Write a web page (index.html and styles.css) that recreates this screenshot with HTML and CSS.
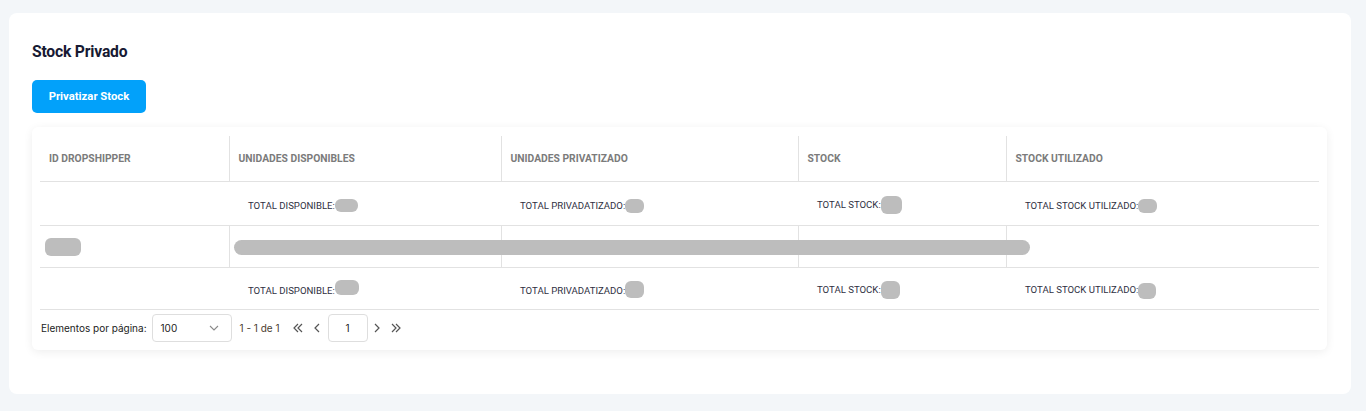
FILE: index.html
```html
<!DOCTYPE html>
<html lang="es">
<head>
  <meta charset="UTF-8" />
  <meta name="viewport" content="width=device-width, initial-scale=1.0"/>
  <title>Stock Privado</title>
  <link rel="stylesheet" href="styles.css">
</head>
<body>
  <div class="page-card">
    <h2 class="page-title">Stock Privado</h2>
    <button class="primary-btn">Privatizar Stock</button>

    <div class="table-card">
      <table class="stock-table">
        <colgroup>
          <col style="width:189px">
          <col style="width:272px">
          <col style="width:297px">
          <col style="width:208px">
          <col>
        </colgroup>
        <thead>
          <tr class="head-row">
            <th>ID DROPSHIPPER</th>
            <th>UNIDADES DISPONIBLES</th>
            <th>UNIDADES PRIVATIZADO</th>
            <th>STOCK</th>
            <th>STOCK UTILIZADO</th>
          </tr>
          <tr class="total-row">
            <td></td>
            <td><span class="total">TOTAL DISPONIBLE:<span class="skel s-a"></span></span></td>
            <td><span class="total">TOTAL PRIVADATIZADO:<span class="skel s-b"></span></span></td>
            <td><span class="total">TOTAL STOCK:<span class="skel s-c"></span></span></td>
            <td><span class="total">TOTAL STOCK UTILIZADO:<span class="skel s-b"></span></span></td>
          </tr>
        </thead>
        <tbody>
          <tr class="data-row">
            <td><span class="skel s-id"></span></td>
            <td><span class="skel s-bar"></span></td>
            <td></td>
            <td></td>
            <td></td>
          </tr>
        </tbody>
        <tfoot>
          <tr class="total-row foot">
            <td></td>
            <td><span class="total">TOTAL DISPONIBLE:<span class="skel s-a2"></span></span></td>
            <td><span class="total">TOTAL PRIVADATIZADO:<span class="skel s-b2"></span></span></td>
            <td><span class="total">TOTAL STOCK:<span class="skel s-c2"></span></span></td>
            <td><span class="total">TOTAL STOCK UTILIZADO:<span class="skel s-d2"></span></span></td>
          </tr>
        </tfoot>
      </table>

      <div class="paginator">
        <span class="pag-label">Elementos por página:</span>
        <div class="pag-select">
          <span>100</span>
          <svg width="10" height="6" viewBox="0 0 10 6"><path d="M1 1l4 4 4-4" fill="none" stroke="#8a8a8a" stroke-width="1.1"/></svg>
        </div>
        <span class="pag-range">1 - 1 de 1</span>
        <button class="pag-icon">
          <svg width="12" height="10" viewBox="0 0 12 10"><path d="M6 1L2 5l4 4M10 1L6 5l4 4" fill="none" stroke="#555" stroke-width="1.2"/></svg>
        </button>
        <button class="pag-icon">
          <svg width="8" height="10" viewBox="0 0 8 10"><path d="M6 1L2 5l4 4" fill="none" stroke="#555" stroke-width="1.2"/></svg>
        </button>
        <div class="pag-input">1</div>
        <button class="pag-icon">
          <svg width="8" height="10" viewBox="0 0 8 10"><path d="M2 1l4 4-4 4" fill="none" stroke="#555" stroke-width="1.2"/></svg>
        </button>
        <button class="pag-icon">
          <svg width="12" height="10" viewBox="0 0 12 10"><path d="M2 1l4 4-4 4M6 1l4 4-4 4" fill="none" stroke="#555" stroke-width="1.2"/></svg>
        </button>
      </div>
    </div>
  </div>
</body>
</html>
```

FILE: styles.css
```css
html, body {
  margin: 0;
  background: #f3f6f9;
  font-family: Roboto, "Liberation Sans", sans-serif;
}

.page-card {
  margin: 13px 15px 16px 9px;
  padding: 29px 24px 44px 23px;
  background: #fff;
  border-radius: 8px;
}

.page-title {
  margin: 0 0 18px;
  font-size: 15.7px;
  font-weight: 700;
  line-height: 20px;
  color: #171a33;
  letter-spacing: -0.2px;
}

.primary-btn {
  display: block;
  width: 114px;
  height: 33px;
  border: none;
  border-radius: 5px;
  background: #02a1fa;
  color: #fff;
  font-family: Roboto, sans-serif;
  font-size: 11.3px;
  font-weight: 700;
  cursor: pointer;
}

.table-card {
  margin-top: 14px;
  padding: 9px 8px 8px 8px;
  background: #fff;
  border-radius: 6px;
  box-shadow: 0 2px 10px rgba(0, 0, 0, 0.07);
}

.stock-table {
  width: 1279px;
  table-layout: fixed;
  border-collapse: collapse;
}

.stock-table th,
.stock-table td {
  padding: 0;
  text-align: left;
  border-bottom: 1px solid #e2e2e2;
}

.head-row th {
  height: 45px;
  padding-left: 9px;
  font-size: 10.3px;
  font-weight: 700;
  color: #7b7b7b;
  vertical-align: middle;
}

.head-row th + th,
.data-row td + td {
  border-left: 1px solid #e2e2e2;
}

.total-row td {
  height: 43px;
  padding-left: 19px;
}

.total-row.foot td {
  height: 41px;
}

.total {
  display: inline-flex;
  align-items: center;
  font-size: 9.6px;
  color: #2f2f3f;
}

.data-row td {
  height: 41px;
  padding-left: 4px;
  overflow: visible;
  white-space: nowrap;
}

.data-row td:first-child {
  padding-left: 5px;
}

.skel {
  display: inline-block;
  background: #bdbdbd;
  border-radius: 6px;
  vertical-align: middle;
}

.s-a { width: 23px; height: 13px; }
.s-b { width: 19px; height: 14px; }
.s-c { width: 21px; height: 18px; }
.s-a2 { width: 24px; height: 15px; margin-top: -6px; }
.s-b2 { width: 19px; height: 17px; margin-top: -2px; }
.s-c2 { width: 19px; height: 18px; margin-top: 2px; }
.s-d2 { width: 18px; height: 16px; margin-top: 4px; }

.s-id { width: 36px; height: 18px; }
.s-bar { width: 796px; height: 15px; border-radius: 8px; position: relative; }

.paginator {
  display: flex;
  align-items: center;
  height: 28px;
  margin-top: 4px;
  font-family: Inter, Roboto, sans-serif;
  font-size: 10px;
  color: #222;
}

.pag-label {
  margin-left: 1px;
  margin-right: 5px;
}

.pag-select {
  display: flex;
  align-items: center;
  justify-content: space-between;
  box-sizing: border-box;
  width: 80px;
  height: 28px;
  padding: 0 12px 0 8px;
  border: 1px solid #dedede;
  border-radius: 4px;
}

.pag-range {
  margin: 0 9px 0 8px;
  color: #4a3d2f;
}

.pag-icon {
  display: flex;
  align-items: center;
  justify-content: center;
  width: 19px;
  height: 28px;
  padding: 0;
  border: none;
  background: none;
}

.pag-input {
  box-sizing: border-box;
  width: 40px;
  height: 28px;
  margin: 0 0 0 1px;
  line-height: 26px;
  text-align: center;
  border: 1px solid #dedede;
  border-radius: 4px;
}
```
